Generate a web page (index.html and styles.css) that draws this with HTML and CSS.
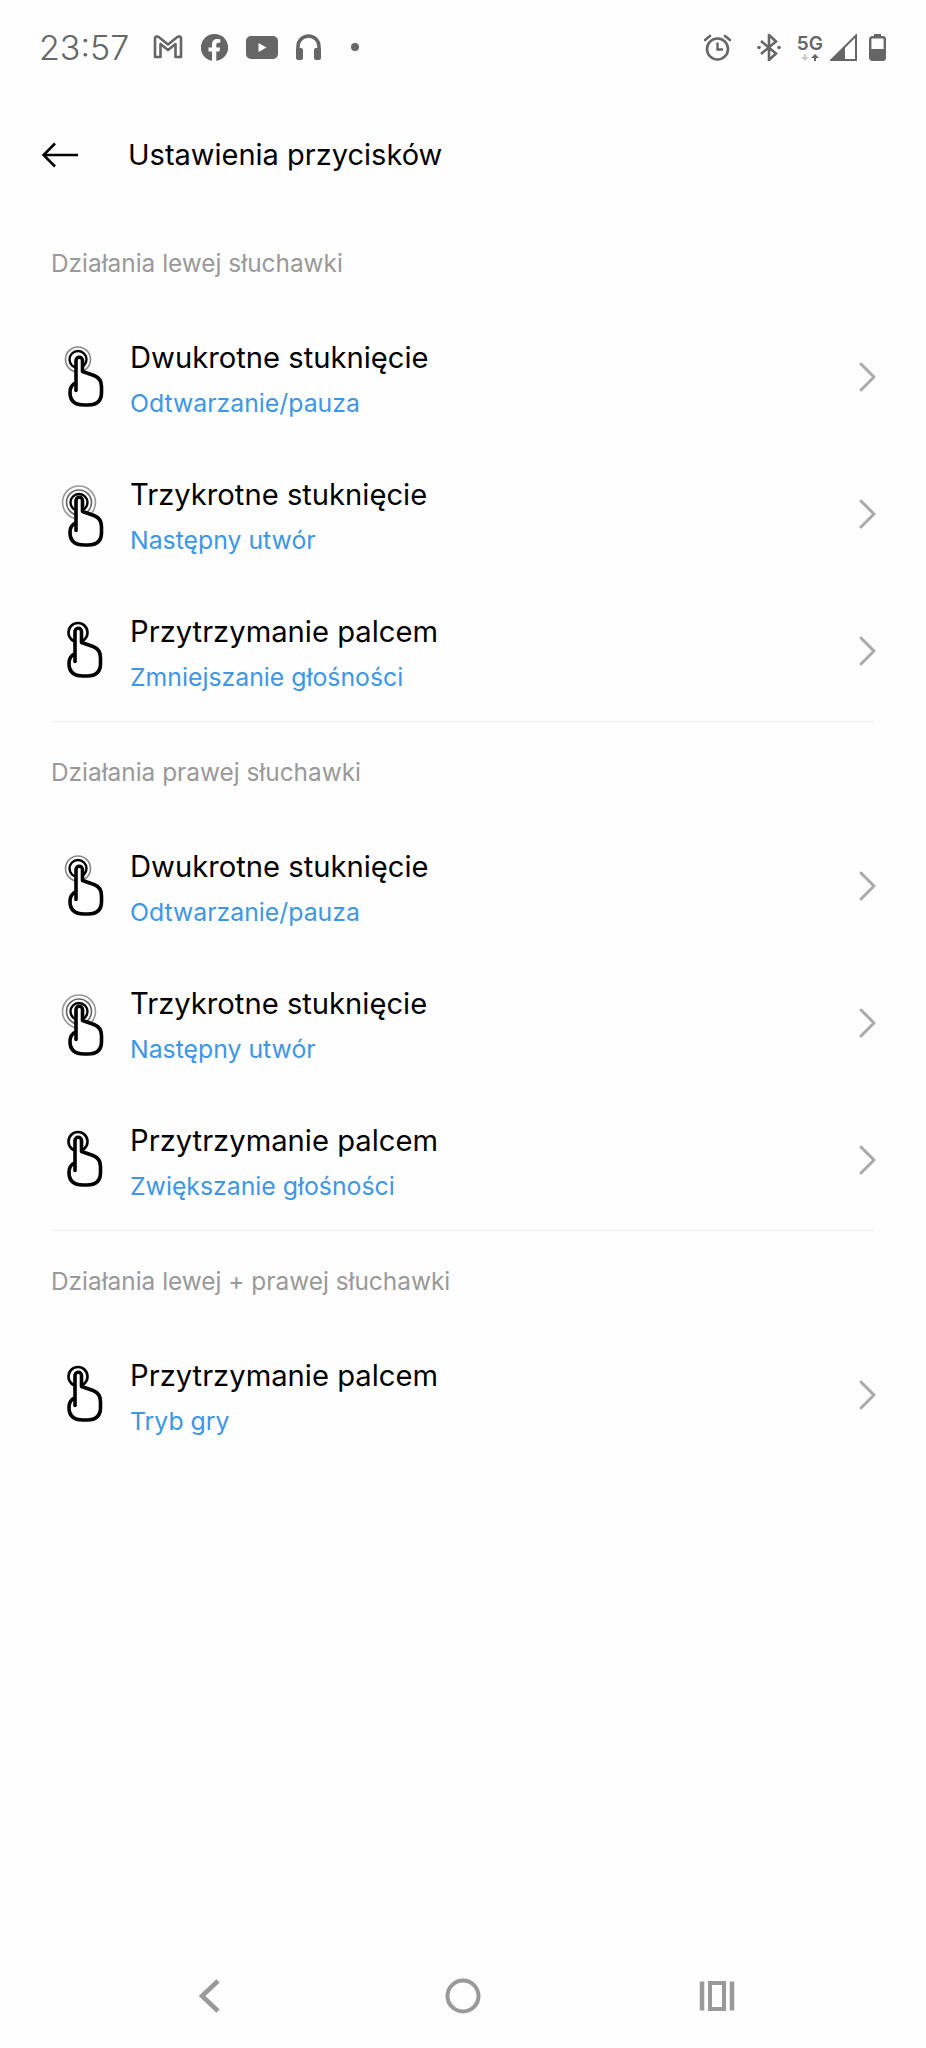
FILE: index.html
```html
<!DOCTYPE html>
<html lang="pl">

<head>
    <meta charset="UTF-8">
    <meta name="viewport" content="width=device-width, initial-scale=1.0">
    <title>Ustawienia przycisków</title>
    <link rel="stylesheet" href="styles.css">
</head>

<body>
    <svg class="defs" width="0" height="0">
        <symbol id="hand" viewBox="0 0 60 100" overflow="visible">
            <path d="M26 60V30a3.25 3.25 0 0 1 6.5 0V41L44 45Q51.5 48 51.5 56V62Q51.5 74.5 38 74.5H34Q20 74.5 20 62Q20 55 26 52" fill="#fff" stroke="#000" stroke-width="3.6" stroke-linecap="round" stroke-linejoin="round"/>
        </symbol>
        <symbol id="tap2" viewBox="0 0 60 100">
            <circle cx="28" cy="29" r="12.5" fill="none" stroke="#888" stroke-width="1.6"/>
            <circle cx="28" cy="29" r="8.5" fill="none" stroke="#000" stroke-width="2.4"/>
            <use href="#hand" width="60" height="100"/>
        </symbol>
        <symbol id="tap3" viewBox="0 0 60 100">
            <circle cx="29" cy="35" r="16.5" fill="none" stroke="#999" stroke-width="1.6"/>
            <circle cx="29" cy="35" r="12.5" fill="none" stroke="#666" stroke-width="1.6"/>
            <circle cx="29" cy="35" r="8.5" fill="none" stroke="#000" stroke-width="2.4"/>
            <use href="#hand" y="3" width="60" height="100"/>
        </symbol>
        <symbol id="hold" viewBox="0 0 60 100">
            <circle cx="28" cy="28" r="9.5" fill="none" stroke="#000" stroke-width="2.6"/>
            <use href="#hand" x="-1" y="-3" width="60" height="100"/>
        </symbol>
        <symbol id="chevron" viewBox="0 0 20 32">
            <path d="M3 3L16 16L3 29" fill="none" stroke="#aaa" stroke-width="3" stroke-linecap="round" stroke-linejoin="round"/>
        </symbol>
    </svg>

    <div class="page">
        <div class="statusbar">
            <div class="status-left">
                <span class="time">23:57</span>
                <svg class="ic-gmail" width="30" height="24" viewBox="0 0 30 24"><path d="M2 22V3.500Q2 1.500 4 1.500Q5 1.500 6 2.300L15 9.500L24 2.300Q25 1.500 26 1.500Q28 1.500 28 3.500V22H22.500V9L15 15L7.500 9V22Z" fill="none" stroke="#666" stroke-width="2.600" stroke-linejoin="round"/></svg>
                <svg width="27" height="27" viewBox="0 0 27 27"><path d="M13.500 0A13.500 13.500 0 0 0 11 26.800V17.500H7.500V13.500H11V10.500C11 7 13 5 16.200 5Q17.800 5 19.300 5.300V8.700H17.500C15.800 8.700 15.300 9.700 15.300 10.800V13.500H19.100L18.500 17.500H15.300V26.900A13.500 13.500 0 0 0 13.500 0Z" fill="#666"/></svg>
                <svg width="32" height="23" viewBox="0 0 32 23"><rect width="32" height="23" rx="5" fill="#666"/><path d="M12.500 7V16L20.500 11.500Z" fill="#fff"/></svg>
                <svg width="25" height="26" viewBox="0 0 25 26"><path d="M2 16V12.500a10.500 10.500 0 0 1 21 0V16" fill="none" stroke="#666" stroke-width="3.500"/><rect x="0" y="14" width="7" height="12" rx="2" fill="#666"/><rect x="18" y="14" width="7" height="12" rx="2" fill="#666"/></svg>
                <span class="dot"></span>
            </div>
            <div class="status-right">
                <svg class="ic-alarm" width="27" height="27" viewBox="0 0 27 27"><circle cx="13.500" cy="15" r="10.500" fill="none" stroke="#666" stroke-width="2.600"/><path d="M13.500 8.500V15.500H19" fill="none" stroke="#666" stroke-width="2.400"/><path d="M1 6L6 2M26 6L21 2" stroke="#666" stroke-width="2.600" stroke-linecap="round"/></svg>
                <svg class="ic-bt" width="24" height="27" viewBox="0 0 24 27"><path d="M4 7L19 19.500L12 26V1L19 7.500L4 20" fill="none" stroke="#666" stroke-width="2.600"/><circle cx="2" cy="13.500" r="1.800" fill="#666"/><circle cx="22" cy="13.500" r="1.800" fill="#666"/></svg>
                <div class="net">
                    <span class="net-label">5G</span>
                    <svg width="18" height="7" viewBox="0 0 18 7"><path d="M3 0H5V3H8L4 7L0 3H3Z" fill="#ccc"/><path d="M13 7H15V4H18L14 0L10 4H13Z" fill="#666"/></svg>
                </div>
                <svg class="ic-signal" width="27" height="27" viewBox="0 0 27 27"><path d="M26 1.500V26H1.500Z" fill="none" stroke="#666" stroke-width="2"/><path d="M15 13V27H0Z" fill="#666"/></svg>
                <svg class="ic-battery" width="17" height="27" viewBox="0 0 17 27"><path d="M5 0H12V3H5Z" fill="#666"/><rect x="1.200" y="3.200" width="14.600" height="22.600" rx="2" fill="none" stroke="#666" stroke-width="2.400"/><path d="M1 15H16V26H1Z" fill="#666"/></svg>
            </div>
        </div>

        <div class="toolbar">
            <svg class="back" width="36" height="26" viewBox="0 0 36 26"><path d="M36 13H2M13 1.500L1.500 13L13 24.500" fill="none" stroke="#000" stroke-width="2.600"/></svg>
            <span class="toolbar-title">Ustawienia przycisków</span>
        </div>

        <div class="section">
            <div class="section-label">Działania lewej słuchawki</div>
            <div class="row">
                <svg class="gesture"><use href="#tap2"/></svg>
                <div class="row-text"><div class="row-title">Dwukrotne stuknięcie</div><div class="row-value">Odtwarzanie/pauza</div></div>
                <svg class="chevron"><use href="#chevron"/></svg>
            </div>
            <div class="row">
                <svg class="gesture"><use href="#tap3"/></svg>
                <div class="row-text"><div class="row-title">Trzykrotne stuknięcie</div><div class="row-value">Następny utwór</div></div>
                <svg class="chevron"><use href="#chevron"/></svg>
            </div>
            <div class="row">
                <svg class="gesture"><use href="#hold"/></svg>
                <div class="row-text"><div class="row-title">Przytrzymanie palcem</div><div class="row-value">Zmniejszanie głośności</div></div>
                <svg class="chevron"><use href="#chevron"/></svg>
            </div>
        </div>

        <div class="section">
            <div class="section-label">Działania prawej słuchawki</div>
            <div class="row">
                <svg class="gesture"><use href="#tap2"/></svg>
                <div class="row-text"><div class="row-title">Dwukrotne stuknięcie</div><div class="row-value">Odtwarzanie/pauza</div></div>
                <svg class="chevron"><use href="#chevron"/></svg>
            </div>
            <div class="row">
                <svg class="gesture"><use href="#tap3"/></svg>
                <div class="row-text"><div class="row-title">Trzykrotne stuknięcie</div><div class="row-value">Następny utwór</div></div>
                <svg class="chevron"><use href="#chevron"/></svg>
            </div>
            <div class="row">
                <svg class="gesture"><use href="#hold"/></svg>
                <div class="row-text"><div class="row-title">Przytrzymanie palcem</div><div class="row-value">Zwiększanie głośności</div></div>
                <svg class="chevron"><use href="#chevron"/></svg>
            </div>
        </div>

        <div class="section last">
            <div class="section-label">Działania lewej + prawej słuchawki</div>
            <div class="row">
                <svg class="gesture"><use href="#hold"/></svg>
                <div class="row-text"><div class="row-title">Przytrzymanie palcem</div><div class="row-value">Tryb gry</div></div>
                <svg class="chevron"><use href="#chevron"/></svg>
            </div>
        </div>

        <div class="navbar">
            <svg width="40" height="36" viewBox="0 0 40 36"><path d="M29 3L13 18L29 33" fill="none" stroke="#999" stroke-width="4.500"/></svg>
            <svg width="40" height="36" viewBox="0 0 40 36"><circle cx="20" cy="18" r="15.500" fill="none" stroke="#999" stroke-width="4"/></svg>
            <svg width="40" height="36" viewBox="0 0 40 36"><path d="M5 3.500V32.500M35 3.500V32.500" stroke="#999" stroke-width="4.500"/><rect x="13" y="5" width="14" height="26" fill="none" stroke="#999" stroke-width="4"/></svg>
        </div>
    </div>
</body>

</html>
```

FILE: styles.css
```css
body {
    margin: 0;
    background-color: #fefefe;
    font-family: Inter, "Noto Sans", sans-serif;
}

.defs {
    position: absolute;
}

.page {
    display: flex;
    flex-direction: column;
    height: 2048px;
}

.statusbar {
    display: flex;
    justify-content: space-between;
    align-items: center;
    height: 94px;
    padding: 0 40px 0 39px;
}

.status-left {
    display: flex;
    align-items: center;
    gap: 18px;
}

.status-right {
    display: flex;
    align-items: center;
}

.time {
    margin-right: 6px;
    font-size: 34px;
    font-weight: 300;
    color: #666;
}

.dot {
    width: 8px;
    height: 8px;
    margin-left: 12px;
    border-radius: 50%;
    background-color: #666;
}

.ic-bt {
    margin-left: 26px;
}

.net {
    display: flex;
    flex-direction: column;
    align-items: center;
    margin-left: 16px;
}

.net-label {
    font-size: 19px;
    line-height: 20px;
    font-weight: 600;
    color: #666;
}

.ic-signal {
    margin-left: 7px;
}

.ic-battery {
    margin-left: 12px;
}

.toolbar {
    display: flex;
    align-items: center;
    height: 117px;
    padding: 2px 0 0 42px;
}

.back {
    margin-right: 50px;
}

.toolbar-title {
    font-size: 29px;
    color: #000;
}

.section {
    margin: 0 51px 0 52px;
    border-bottom: 1px solid #ececec;
}

.section.last {
    border-bottom: none;
}

.section-label {
    display: flex;
    align-items: center;
    height: 95px;
    margin-left: -1px;
    padding-top: 2px;
    font-size: 24.4px;
    color: #999;
}

.row {
    display: flex;
    align-items: center;
    height: 137px;
}

.gesture {
    flex-shrink: 0;
    width: 60px;
    height: 137px;
    margin: 4px 20px 0 -2px;
}

.row-text {
    flex: 1;
    padding-top: 1px;
}

.row-title {
    font-size: 29.2px;
    line-height: 40px;
    color: #000;
}

.row-value {
    margin-top: 7px;
    font-size: 24.8px;
    line-height: 36px;
    color: #3d96e6;
}

.chevron {
    width: 20px;
    height: 32px;
    margin: -4px -3px 0 0;
}

.navbar {
    display: flex;
    justify-content: center;
    gap: 214px;
    margin-top: auto;
    margin-bottom: 34px;
}
```
